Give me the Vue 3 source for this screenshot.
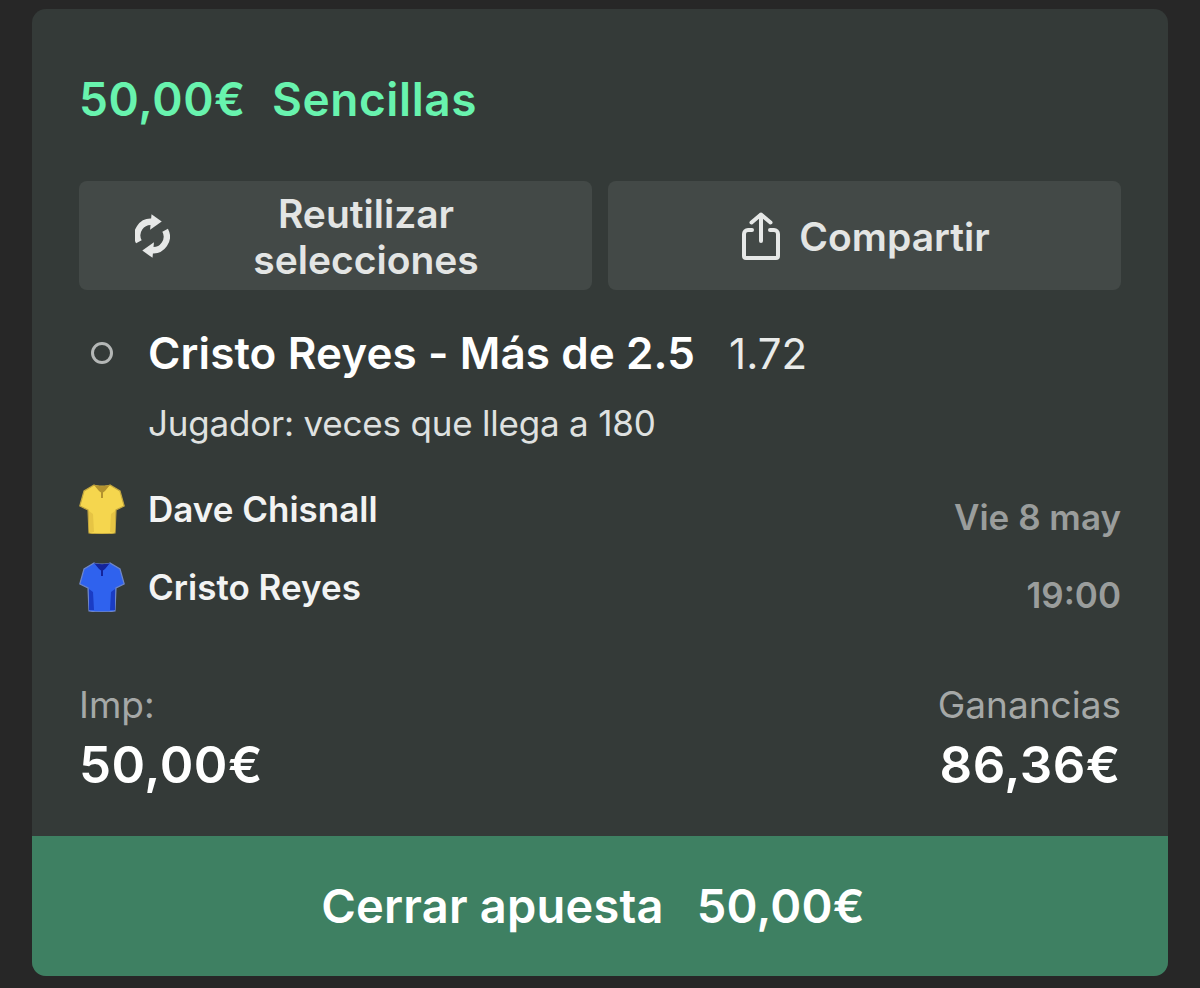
<script setup>
const teams = [
  { name: 'Dave Chisnall', when: 'Vie 8 may', body: '#f5d64e', dark: '#b3922f', edge: '#c2a63f', panel: '#e6c444' },
  { name: 'Cristo Reyes', when: '19:00', body: '#2f62ee', dark: '#14249a', edge: '#6f86c8', panel: '#1a3cc4' }
]
</script>

<template>
  <main class="page">
    <section class="card">
      <div class="content">
        <h1 class="title"><span>50,00€</span><span>Sencillas</span></h1>
        <div class="actions">
          <button class="action">
            <svg class="reuse-icon" viewBox="0 0 36 47" aria-hidden="true">
              <g>
                <path class="arc" d="M4 29.500A14 14 0 0 1 18 9" />
                <path class="head" d="M17 1 27.500 8.500 15.500 17z" />
              </g>
              <g transform="rotate(180 17.500 23.500)">
                <path class="arc" d="M4 29.500A14 14 0 0 1 18 9" />
                <path class="head" d="M17 1 27.500 8.500 15.500 17z" />
              </g>
            </svg>
            <span class="reuse-label">Reutilizar selecciones</span>
          </button>
          <button class="action share">
            <svg class="share-icon" viewBox="0 0 38 48" aria-hidden="true">
              <path d="M10 18H6a4 4 0 0 0-4 4v22a2 2 0 0 0 2 2h30a2 2 0 0 0 2-2V22a4 4 0 0 0-4-4h-4" />
              <path d="M19 29V2.500M9.500 10.500 19 2.500l9.500 8" />
            </svg>
            <span>Compartir</span>
          </button>
        </div>

        <div class="selection">
          <i class="dot"></i>
          <strong>Cristo Reyes - Más de 2.5</strong>
          <span class="odds">1.72</span>
        </div>
        <p class="market">Jugador: veces que llega a 180</p>

        <div class="teams">
          <div v-for="team in teams" :key="team.name" class="team">
            <svg class="shirt" viewBox="0 0 46 50" aria-hidden="true">
              <path d="M15 1 5 7 .8 22l8.200 4 1 23c9 1.300 17 1.300 26 0l1-23 8.200-4L41 7 31 1c-3 1.500-13 1.500-16 0z" :fill="team.body" :stroke="team.edge" stroke-width="1.200" />
              <path d="M10 27 14 30 15 48 10 48zM36 27 32 30 31 48 36 48z" :fill="team.panel" />
              <path d="M15 1c3 1.500 13 1.500 16 0l-5 6-2 1.500V14h-2V8.500L20 7z" :fill="team.dark" />
            </svg>
            <span class="team-name">{{ team.name }}</span>
            <span class="team-when">{{ team.when }}</span>
          </div>
        </div>

        <div class="totals">
          <div>
            <div class="label">Imp:</div>
            <div class="amount">50,00€</div>
          </div>
          <div class="right">
            <div class="label">Ganancias</div>
            <div class="amount">86,36€</div>
          </div>
        </div>
      </div>
      <button class="cashout"><span>Cerrar apuesta</span><span>50,00€</span></button>
    </section>
  </main>
</template>

<style>
html, body { margin: 0; background: #272727; }
</style>

<style scoped>
.page {
  box-sizing: border-box;
  height: 988px;
  padding: 9px 32px 12px;
  background: #272727;
  font-family: Inter, "Liberation Sans", sans-serif;
}
.card {
  height: 967px;
  display: flex;
  flex-direction: column;
  border-radius: 14px;
  overflow: hidden;
  background: #343a38;
}
.content {
  flex: 1;
  padding: 0 47px;
}
.title {
  display: flex;
  gap: 26px;
  margin: 63px 0 0;
  color: #68f3ae;
  font-size: 46px;
  letter-spacing: .600px;
  line-height: 54px;
  font-weight: 600;
}
.actions {
  display: grid;
  grid-template-columns: 1fr 1fr;
  gap: 16px;
  margin-top: 55px;
}
.action {
  height: 109px;
  border: 0;
  border-radius: 8px;
  background: #434947;
  color: #e3e5e4;
  font: 600 39px/46px Inter, "Liberation Sans", sans-serif;
  display: flex;
  align-items: center;
  padding: 0;
}
.reuse-icon { width: 35px; height: 46px; margin-left: 56px; flex: none; }
.arc { fill: none; stroke: #e6e8e7; stroke-width: 6.500; }
.head { fill: #e6e8e7; }
.reuse-label { width: 270px; margin-left: 61px; margin-top: 3px; text-align: center; }
.share { justify-content: center; gap: 19px; padding-left: 3px; }
.share > span { margin-top: 2px; }
.share-icon { width: 38px; height: 48px; fill: none; stroke: #e6e8e7; stroke-width: 4; stroke-linecap: round; stroke-linejoin: round; }
.selection {
  display: flex;
  align-items: center;
  margin-top: 40px;
  height: 46px;
  color: #fff;
}
.dot {
  box-sizing: border-box;
  width: 22px;
  height: 22px;
  margin: 0 35px 0 12px;
  border: 3.500px solid #b4b7b6;
  border-radius: 50%;
}
.selection strong { font-size: 44px; letter-spacing: .100px; font-weight: 600; }
.odds { margin-left: 34px; font-size: 42px; color: #e9ebea; }
.market {
  margin: 24px 0 0 69px;
  color: #dfe1e0;
  font-size: 35px;
  letter-spacing: -.200px;
  line-height: 46px;
}
.teams {
  margin-top: 38px;
  display: flex;
  flex-direction: column;
  gap: 28px;
}
.team {
  height: 50px;
  display: flex;
  align-items: center;
  gap: 23px;
}
.shirt { width: 46px; height: 50px; flex: none; }
.team-name { flex: 1; color: #f2f3f3; font-size: 35px; font-weight: 600; }
.team-when { color: #9a9d9c; font-size: 35px; font-weight: 600; margin-top: 15px; }
.totals {
  display: flex;
  justify-content: space-between;
  margin-top: 68px;
}
.right { text-align: right; }
.label { color: #a5a8a7; font-size: 37px; line-height: 50px; }
.amount { color: #fff; font-size: 51px; letter-spacing: .500px; line-height: 62px; margin-top: 4px; font-weight: 600; }
.cashout {
  height: 140px;
  border: 0;
  flex: none;
  background: #3e8062;
  color: #fff;
  font: 600 47px/56px Inter, "Liberation Sans", sans-serif;
  letter-spacing: .200px;
  display: flex;
  align-items: center;
  justify-content: center;
  gap: 33px;
  padding: 0 14px 0 0;
}
</style>
